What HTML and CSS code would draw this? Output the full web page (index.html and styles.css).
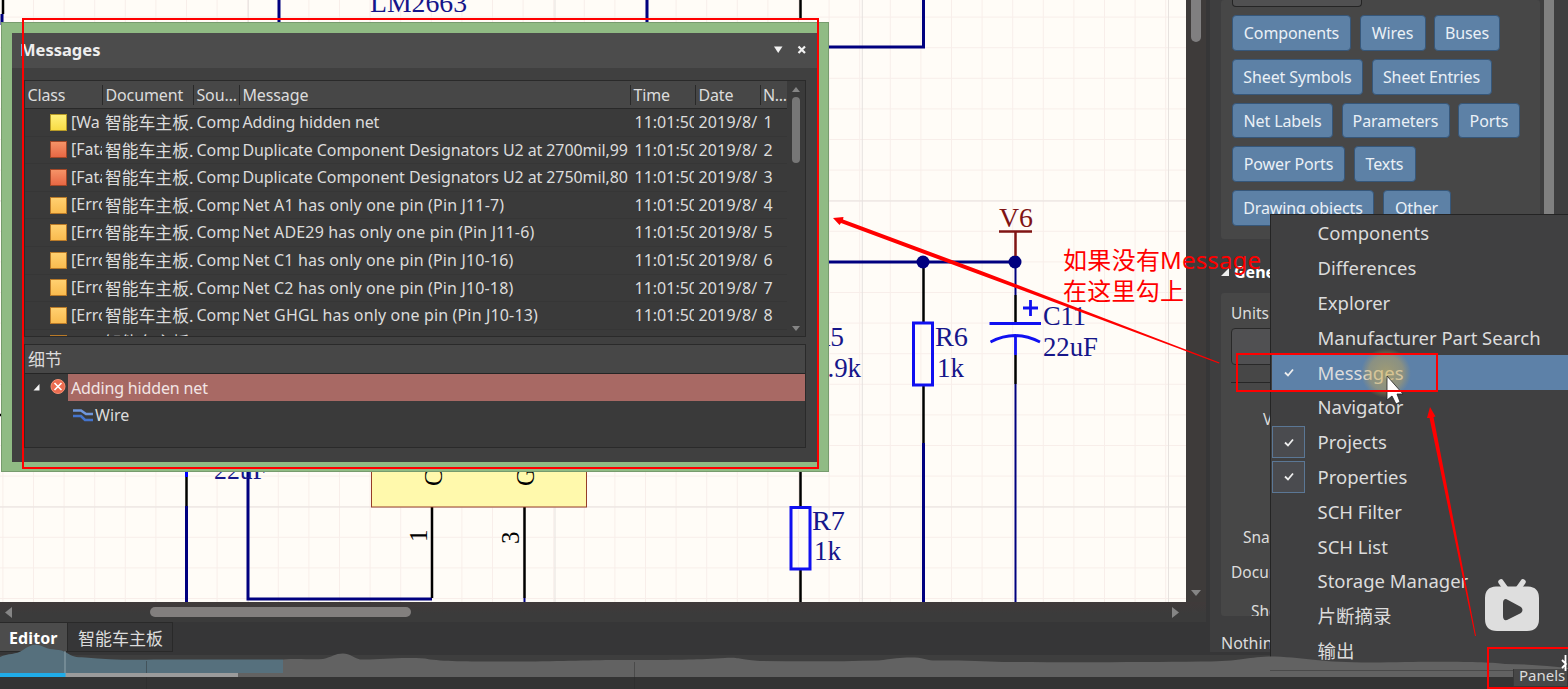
FILE: index.html
```html
<!DOCTYPE html>
<html lang="zh-CN">
<head>
<meta charset="utf-8">
<title>Schematic Editor</title>
<link rel="stylesheet" href="styles.css">
</head>
<body>
<div class="app">
  <main class="workspace">
    <div class="editor">
      <svg class="sheet" width="1186" height="602" viewBox="0 0 1186 602">
        <defs>
          <pattern id="minor" width="30.6" height="30.6" x="2.400" y="16.6" patternUnits="userSpaceOnUse">
            <path d="M0 0.5H30.6M0.5 0V30.6" stroke="#f8eeea" fill="none"/>
          </pattern>
        </defs>
        <rect width="1186" height="602" fill="#fffcf7"/>
        <rect width="1186" height="602" fill="url(#minor)"/>
        <path d="M0 201H1186M0 507H1186M248.3 0V602M555 0V602M862.3 0V602M1168.5 0V602" stroke="#e7e2df" fill="none"/>
        <g fill="none" stroke="#00007f" stroke-width="3">
          <path d="M279 0V25M647 0V25M923.500 0V47H826M2 14V25M186.500 506V602M248 470V599H432M826 262H1015M923.500 443V602"/>
          <path d="M1015.500 262V295M1015.500 384V602M524.500 598V602" stroke-width="2"/>
        </g>
        <g fill="none" stroke="#000" stroke-width="2.500">
          <path d="M3 0V14M800.500 0V20M186.500 477V506M432 507V598M524.500 507V598M800.500 470V507M800.500 569V602M923.500 267V323M923.500 386V443M1015.500 295V323M1015.500 355V384M0 415H4"/>
        </g>
        <path d="M186.500 470V477" stroke="#00f" stroke-width="3"/>
        <rect x="371.500" y="450" width="215" height="57" fill="#fff9ac" stroke="#963d28"/>
        <g fill="none" stroke="#1010f0" stroke-width="3">
          <rect x="913.500" y="323" width="19" height="62"/>
          <rect x="791" y="507.500" width="19" height="61.500"/>
          <path d="M989.500 323.500H1041M990.500 342Q1015 329 1040 342M1015.500 335V355M1023 308H1038M1030.500 300V316" stroke-width="2.800"/>
        </g>
        <circle cx="923" cy="262" r="6.500" fill="#00007f"/>
        <circle cx="1015" cy="262" r="6.500" fill="#00007f"/>
        <path d="M999 231.500H1032M1015.500 232V256" stroke="#801414" stroke-width="2.500" fill="none"/>
        <g class="sch">
          <text x="370" y="12" textLength="97" lengthAdjust="spacingAndGlyphs">LM2663</text>
          <text x="214" y="479" textLength="53" lengthAdjust="spacingAndGlyphs">22uF</text>
          <text x="812" y="530" textLength="33" lengthAdjust="spacingAndGlyphs">R7</text>
          <text x="814" y="560" textLength="27" lengthAdjust="spacingAndGlyphs">1k</text>
          <text x="935" y="345.500" textLength="33" lengthAdjust="spacingAndGlyphs">R6</text>
          <text x="937" y="377" textLength="27" lengthAdjust="spacingAndGlyphs">1k</text>
          <text x="812" y="345.500" textLength="32" lengthAdjust="spacingAndGlyphs">R5</text>
          <text x="814" y="377" textLength="47" lengthAdjust="spacingAndGlyphs">4.9k</text>
          <text x="1043" y="325" textLength="43" lengthAdjust="spacingAndGlyphs">C11</text>
          <text x="1043" y="356" textLength="55" lengthAdjust="spacingAndGlyphs">22uF</text>
          <text class="power" x="999" y="226.500" textLength="34" lengthAdjust="spacingAndGlyphs">V6</text>
          <text class="pin" transform="translate(427 542) rotate(-90)">1</text>
          <text class="pin" transform="translate(519 544) rotate(-90)">3</text>
          <text class="pin" transform="translate(442 486) rotate(-90)">C</text>
          <text class="pin" transform="translate(534 486) rotate(-90)">G</text>
        </g>
      </svg>
      <div class="vbar"><i class="vthumb"></i><svg width="10" height="6"><path d="M0 0H10L5 6Z" fill="#858585"/></svg></div>
    </div>
    <div class="hbar">
      <svg width="7" height="11"><path d="M7 0V11L0 5.500Z" fill="#858585"/></svg>
      <i class="hthumb"></i>
      <svg width="7" height="11"><path d="M0 0V11L7 5.500Z" fill="#858585"/></svg>
    </div>
    <nav class="tabs"><span class="tab on">Editor</span><span class="tab">智能车主板</span></nav>
  </main>

  <aside class="props">
    <div class="props-body">
      <section class="card filters">
        <i class="ghost-btn"></i>
        <div class="tags"><b class="w119">Components</b><b class="w66">Wires</b><b class="w66">Buses</b></div>
        <div class="tags"><b class="w131">Sheet Symbols</b><b class="w120">Sheet Entries</b></div>
        <div class="tags"><b class="w101">Net Labels</b><b class="w108">Parameters</b><b class="w62">Ports</b></div>
        <div class="tags"><b class="w113">Power Ports</b><b class="w62">Texts</b></div>
        <div class="tags"><b class="w142">Drawing objects</b><b class="w68">Other</b></div>
      </section>
      <h2 class="section"><svg width="8" height="8"><path d="M8 0V8H0Z" fill="#eee"/></svg>General</h2>
      <section class="card general">
        <span class="lbl units">Units</span>
        <i class="unit-btn"></i>
        <hr class="rule">
        <span class="lbl visible">Visible Grid</span>
        <span class="lbl snap">Snap Grid</span>
        <span class="lbl font">Document Font</span>
        <span class="lbl border">Sheet Border</span>
      </section>
      <p class="status">Nothing selected</p>
    </div>
    <i class="props-thumb"></i>
  </aside>
</div>

<div class="window">
  <section class="messages">
    <header class="title"><span>Messages</span>
      <svg width="32" height="12" viewBox="0 0 32 12"><path d="M0 2.500H8.500L4.200 9Z" fill="#f2f2f2"/><path d="M24.500 2.500L31 9M31 2.500L24.500 9" stroke="#f2f2f2" stroke-width="2.200"/></svg>
    </header>
    <div class="table">
      <div class="rows">
        <div class="row head"><span>Class</span><span>Document</span><span>Sou...</span><span>Message</span><span>Time</span><span>Date</span><span>N...</span></div>
        <div class="row"><span><i class="warn"></i>[Wa</span><span>智能车主板.</span><span>Comp</span><span class="tight">Adding hidden net</span><span>11:01:50</span><span>2019/8/</span><span>1</span></div>
        <div class="row"><span><i class="fatal"></i>[Fata</span><span>智能车主板.</span><span>Comp</span><span class="dup">Duplicate Component Designators U2 at 2700mil,99</span><span>11:01:50</span><span>2019/8/</span><span>2</span></div>
        <div class="row"><span><i class="fatal"></i>[Fata</span><span>智能车主板.</span><span>Comp</span><span class="dup">Duplicate Component Designators U2 at 2750mil,80</span><span>11:01:50</span><span>2019/8/</span><span>3</span></div>
        <div class="row"><span><i></i>[Erro</span><span>智能车主板.</span><span>Comp</span><span class="net">Net A1 has only one pin (Pin J11-7)</span><span>11:01:50</span><span>2019/8/</span><span>4</span></div>
        <div class="row"><span><i></i>[Erro</span><span>智能车主板.</span><span>Comp</span><span class="net">Net ADE29 has only one pin (Pin J11-6)</span><span>11:01:50</span><span>2019/8/</span><span>5</span></div>
        <div class="row"><span><i></i>[Erro</span><span>智能车主板.</span><span>Comp</span><span class="net">Net C1 has only one pin (Pin J10-16)</span><span>11:01:50</span><span>2019/8/</span><span>6</span></div>
        <div class="row"><span><i></i>[Erro</span><span>智能车主板.</span><span>Comp</span><span class="net">Net C2 has only one pin (Pin J10-18)</span><span>11:01:50</span><span>2019/8/</span><span>7</span></div>
        <div class="row"><span><i></i>[Erro</span><span>智能车主板.</span><span>Comp</span><span class="net">Net GHGL has only one pin (Pin J10-13)</span><span>11:01:50</span><span>2019/8/</span><span>8</span></div>
        <div class="row last"><span><i></i></span><span>智能车主板</span><span></span><span></span><span></span><span></span><span></span></div>
      </div>
      <div class="tbar"><svg width="8" height="5"><path d="M0 5H8L4 0Z" fill="#858585"/></svg><i></i><svg width="8" height="5"><path d="M0 0H8L4 5Z" fill="#858585"/></svg></div>
    </div>
    <div class="details">
      <div class="dhead">细节</div>
      <div class="drow">
        <svg width="43" height="26" viewBox="0 0 43 26"><path d="M14.500 10V16.500H8.500Z" fill="#f4f4f4"/><circle cx="33" cy="12.500" r="7" fill="#ec6c50" stroke="#f58e72"/><path d="M29.500 9L36.500 16M36.500 9L29.500 16" stroke="#fff" stroke-width="1.600"/></svg>
        <span class="picked tight">Adding hidden net</span>
      </div>
      <div class="wire"><svg width="20" height="14" viewBox="0 0 20 14" fill="none" stroke-width="2.600"><path d="M0 2.500H8L13 6H20" stroke="#6f96dc"/><path d="M0 8H8L12 12H20" stroke="#4474cd"/></svg>Wire</div>
    </div>
  </section>
</div>

<ul class="menu">
  <li><i></i>Components</li>
  <li><i></i>Differences</li>
  <li><i></i>Explorer</li>
  <li><i></i>Manufacturer Part Search</li>
  <li class="active"><i><svg width="10" height="9"><path d="M1 4.500L4 7.500L9 1.500"/></svg></i>Messages</li>
  <li><i></i>Navigator</li>
  <li class="checked"><i><svg width="10" height="9"><path d="M1 4.500L4 7.500L9 1.500"/></svg></i>Projects</li>
  <li class="checked"><i><svg width="10" height="9"><path d="M1 4.500L4 7.500L9 1.500"/></svg></i>Properties</li>
  <li><i></i>SCH Filter</li>
  <li><i></i>SCH List</li>
  <li><i></i>Storage Manager</li>
  <li><i></i>片断摘录</li>
  <li><i></i>输出</li>
</ul>

<svg class="overlay" width="1568" height="689" viewBox="0 0 1568 689">
  <defs>
    <radialGradient id="halo"><stop offset="0" stop-color="#d8b248" stop-opacity=".55"/><stop offset=".7" stop-color="#c8a650" stop-opacity=".42"/><stop offset="1" stop-color="#c0a050" stop-opacity="0"/></radialGradient>
  </defs>
  <path d="M0 657C8 653 16 655 23 650C30 645 36 643 44 647C52 651 60 648 67 653C73 657 75 657 85 657.500C110 660 130 660 160 659.500L283 659.500V673H0Z" fill="#56707d"/>
  <path d="M283 659.500C300 658 310 660 323 659C332 657 335 653.500 343 653.500C350 653.500 354 658 360 659.500C380 660 395 657 425 658.500C440 662 480 661.500 520 661.500C570 661 600 659.500 640 660C680 660 700 659.500 725 658C740 657 740 660 760 661C800 661.500 840 661.500 878 660.500C895 658 905 657 915 657.500C926 658 926 661 940 660.500C970 660 990 662 1010 662C1090 662.500 1150 662 1200 661.500C1240 662 1250 656 1275 656.500C1310 658 1320 663 1380 662.500C1450 661 1490 662 1505 664C1530 664 1550 666 1568 668V677H238V673H283Z" fill="#626262"/>
  <path d="M0 677H1568V689H0Z" fill="#343434"/>
  <path d="M146.500 661V689M634.500 662V689" stroke="#292929" stroke-opacity=".4"/>
  <path d="M1270 670.500H1568" stroke="#4a4a4a"/>
  <path d="M0 673H238V677H0Z" fill="#9b9b9b"/>
  <path d="M0 673H65.500V677H0Z" fill="#20ace8"/>
  <path d="M65 651V673" stroke="#90a4ad"/>
</svg>
<div class="panels">Panels</div>

<svg class="overlay" width="1568" height="689" viewBox="0 0 1568 689">
  <circle cx="1386" cy="373" r="25" fill="url(#halo)"/>
  <path d="M1387 376V400L1392 396L1396 404L1400 402L1397 394H1403Z" fill="#fff" stroke="#222" stroke-width=".8"/>
  <path d="M1501 582L1506 589M1523 582L1518 589" stroke="#dedede" fill="none" stroke-width="5.500" stroke-linecap="round"/>
  <path d="M1496 586.500H1528Q1539 587 1539 598V619Q1539 631 1527 631H1497Q1485 631 1485 619V598Q1485 587 1496 586.500ZM1506 599Q1503 599 1503 603V616Q1503 621 1507 620L1521 613Q1524 610 1521 607L1508 600Z" fill="#dedede" fill-rule="evenodd"/>
  <path d="M1562 660L1566 664L1562 668M1565.500 655V671" stroke="#fff" stroke-width="1.800" fill="none"/>
  <g fill="none" stroke="#f00" stroke-width="2">
    <rect x="23" y="19" width="795" height="449"/>
    <rect x="1237" y="354" width="200" height="37"/>
    <rect x="1488" y="648" width="90" height="40"/>
  </g>
  <path d="M833 218L843.500 217L843 219.500L980 270.500L1219.500 362.400L1219 363.400L978 274L841 223L839.500 225Z" fill="#f00"/>
  <path d="M1430 407L1435.500 416.500L1433.500 417L1476 636H1475L1429.500 418L1427 418Z" fill="#f00"/>
  <g class="note"><text x="1063" y="269" textLength="97">如果没有</text><text x="1160" y="269" textLength="101">Message</text><text x="1063" y="300" textLength="121">在这里勾上</text></g>
</svg>
</body>
</html>
```

FILE: styles.css
```css
* { box-sizing: border-box; }
body { margin: 0; width: 1568px; height: 689px; overflow: hidden; position: relative; background: #3e3e3e; color: #dcdcdc; font: 16px/20px "Noto Sans", "Noto Sans CJK SC", sans-serif; }
svg { display: block; flex: none; }
i { font-style: normal; }

.app { display: grid; grid-template-columns: 1210px 358px; height: 655px; background: #363637; }
.workspace { display: flex; flex-direction: column; }
.editor { display: flex; height: 602px; }
.vbar { width: 20px; background: #3e3b3a; display: flex; flex-direction: column; align-items: center; justify-content: space-between; padding-bottom: 6px; }
.vthumb { width: 10px; height: 42px; background: #807f80; border-radius: 0 0 5px 5px; }
.hbar { display: flex; align-items: center; height: 20px; width: 1206px; padding: 0 27px 0 5px; background: linear-gradient(#403a3a, #3b3b3b 60%); }
.hthumb { width: 261px; height: 10px; border-radius: 5px; background: #827f7e; margin-left: 138px; margin-right: auto; }
.tabs { display: flex; height: 30px; }
.tab { border: 1px solid #292929; border-left: 0; padding: 7px 10px 0; width: 105px; font-size: 17px; line-height: 18px; white-space: nowrap; }
.tab.on { width: 68px; padding: 6px 0 0 9px; background: #4c4c4c; font-weight: bold; font-size: 16px; letter-spacing: .1px; color: #fff; }

.props { display: flex; background: #3e3e3f; height: 652px; overflow: hidden; }
.props-body { width: 334px; padding-left: 11px; }
.card { background: #474747; width: 319px; border-radius: 3px; padding-left: 11px; }
.filters { height: 239px; display: flex; flex-direction: column; gap: 8px; }
.ghost-btn { display: block; width: 130px; height: 7px; border: 1px solid #252525; border-top: 0; background: #505051; border-radius: 0 0 4px 4px; }
.tags { display: flex; gap: 8.5px; height: 35.800px; }
.tags b { background: #5d81a6; border: 1px solid #36577a; border-radius: 4px; color: #eaf0f6; font-weight: 400; font-size: 16px; line-height: 34px; text-align: center; white-space: nowrap; letter-spacing: -.12px; }
.w119 { width: 119px; } .w66 { width: 66px; } .w131 { width: 131px; } .w120 { width: 120px; } .w101 { width: 101px; }
.w108 { width: 108px; } .w62 { width: 62px; } .w113 { width: 113px; } .w142 { width: 142px; } .w68 { width: 68px; }
.section { display: flex; align-items: center; gap: 5px; margin: 23px 0 11px; height: 20px; font-size: 16px; color: #fff; }
.general { height: 323px; overflow: hidden; display: flex; flex-direction: column; align-items: flex-start; padding: 10px 0 0 10px; }
.general > * { flex: none; }
.lbl { font-size: 15.5px; line-height: 20px; white-space: nowrap; }
.unit-btn { width: 120px; height: 37px; margin-top: 5px; border: 1px solid #292929; border-radius: 4px; background: #505052; }
.rule { width: 290px; border: 0; border-top: 1px solid #262626; margin: 17px 0 26px; }
.visible { margin-left: 32px; }
.snap { margin: 98px 0 0 12px; }
.font { margin-top: 15px; }
.border { margin: 19px 0 0 20px; }
.status { margin: 17px 0 0; font-size: 16px; white-space: nowrap; }
.props-thumb { width: 10px; background: #808080; }

.window { position: absolute; left: 1px; top: 22px; width: 828px; height: 450px; padding: 10px 11px 9px 10px; background: #90bb84; border: 1px solid #779b6e; }
.messages { height: 429px; background: #404040; padding-right: 11px; }
.title { display: flex; justify-content: space-between; align-items: center; height: 35px; margin-right: -11px; padding: 0 11px 1px 8px; background: #4c4c4c; color: #eee; font-weight: bold; font-size: 16.5px; }
.table { display: flex; height: 257px; margin: 12px 0 0 12px; border: 1px solid #2a2a2a; background: #3a3a3a; overflow: hidden; }
.rows { width: 763px; overflow: hidden; }
.row { display: grid; grid-template-columns: 78px 91px 46px 391px 65px 65px 27px; height: 27.600px; border-bottom: 1px solid #363636; line-height: 27.400px; white-space: nowrap; }
.row span { overflow: hidden; padding-left: 2.400px; display: block; margin-right: 1px; }
.row:not(.head) span:first-child { padding-left: 25px; display: flex; align-items: center; gap: 4px; }
.row i { width: 17px; height: 17px; flex: none; border: 1px solid #b97a28; background: linear-gradient(#ffd070, #f9bb4f); }
.row i.fatal { border-color: #a34727; background: linear-gradient(#f59367, #e76744); }
.row i.warn { border-color: #b79b27; background: linear-gradient(#fff07a, #f8dc45); }
.row.head { height: 28px; background: #474747; border-color: #292929; }
.row.head span { height: 20px; line-height: 20px; margin: 4px 0 0; border-right: 1px solid #292929; letter-spacing: -.1px; }
.row.head span:last-child { border: 0; letter-spacing: -.3px; padding-left: 2px; }
.row:not(.head) span:nth-child(5) { padding-left: 3.500px; margin-right: 2px; }
.row:not(.head) span:nth-child(6) { letter-spacing: .2px; }
.row:not(.head) span:nth-child(2) { font-size: 16.800px; padding-left: 2px; }
.row.last { line-height: 25px; }
.tight { letter-spacing: -.15px; }
.row .dup { letter-spacing: -.09px; margin-right: 0; }
.net { letter-spacing: .15px; }
.dhead { font-size: 17px; }
.tbar { width: 18px; display: flex; flex-direction: column; align-items: center; padding: 6px 0 5px; }
.tbar i { width: 8px; height: 66px; margin: 5px 0 auto; border-radius: 4px; background: #777; }
.details { height: 104px; margin: 7px 0 0 12px; border: 1px solid #2a2a2a; background: #3a3a3a; }
.dhead { height: 29px; padding: 5px 0 0 3px; background: #474747; border-bottom: 1px solid #252525; }
.drow { display: flex; height: 27px; }
.picked { flex: 1; background: #a86964; padding-left: 3px; line-height: 28px; color: #f2e5e4; }
.wire { display: flex; align-items: center; gap: 2px; padding-left: 48px; height: 27px; }

.menu { position: absolute; left: 1270px; top: 214px; width: 298px; height: 456px; margin: 0; padding: 1px 0 0 1px; list-style: none; background: #404041; border: 1px solid #242424; border-right: 0; font-size: 18.5px; }
.menu li { display: flex; align-items: center; height: 34.800px; white-space: nowrap; }
.menu i { width: 33px; height: 32px; margin-right: 12.500px; display: flex; align-items: center; justify-content: center; border: 1px solid transparent; }
.menu path { fill: none; stroke: #eee; stroke-width: 1.800; }
.menu .active { background: #5d81a8; }
.menu .checked i { background: #4a4b4f; border-color: #5b7795; }
.panels { position: absolute; left: 1513px; top: 669px; width: 55px; height: 18px; padding-left: 5px; background: #474747; border: 1px solid #383838; border-top: 0; font-size: 15px; line-height: 13px; }

.overlay { position: absolute; left: 0; top: 0; pointer-events: none; }
.sch { font: 27px "Liberation Serif", serif; fill: #16168a; }
.sch .power { fill: #801414; }
.sch .pin { fill: #000; font-size: 25px; }
.note { font: 24px "Noto Sans", "Noto Sans CJK SC", sans-serif; fill: #f00; }
```
